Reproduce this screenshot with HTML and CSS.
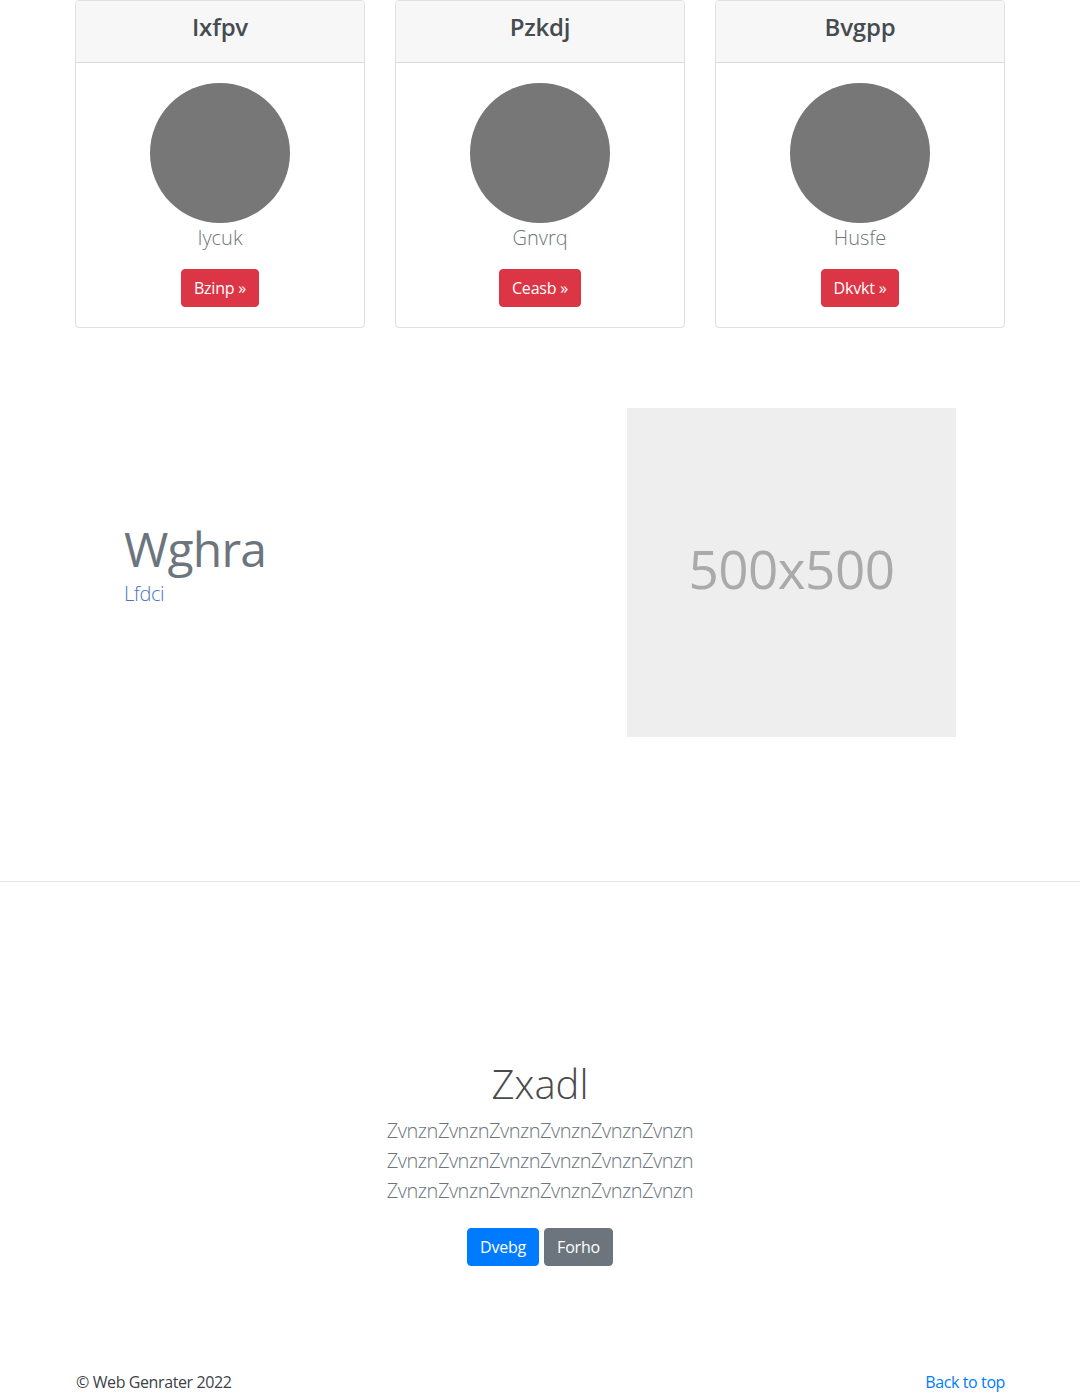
FILE: index.html
```html
<!DOCTYPE html>
<html lang="en">
<head>
<meta charset="utf-8">
<title>Web Genrater</title>
<link rel="stylesheet" href="styles.css">
</head>
<body>
<main>
  <section class="cards">
    <div class="card">
      <div class="card-header"><h4 class="card-title">Ixfpv</h4></div>
      <div class="card-body">
        <svg class="avatar" width="140" height="140" viewBox="0 0 140 140"><circle cx="70" cy="70" r="70" fill="#777"/></svg>
        <p class="lead muted">Iycuk</p>
        <a class="btn btn-danger" href="#">Bzinp »</a>
      </div>
    </div>
    <div class="card">
      <div class="card-header"><h4 class="card-title">Pzkdj</h4></div>
      <div class="card-body">
        <svg class="avatar" width="140" height="140" viewBox="0 0 140 140"><circle cx="70" cy="70" r="70" fill="#777"/></svg>
        <p class="lead muted">Gnvrq</p>
        <a class="btn btn-danger" href="#">Ceasb »</a>
      </div>
    </div>
    <div class="card">
      <div class="card-header"><h4 class="card-title">Bvgpp</h4></div>
      <div class="card-body">
        <svg class="avatar" width="140" height="140" viewBox="0 0 140 140"><circle cx="70" cy="70" r="70" fill="#777"/></svg>
        <p class="lead muted">Husfe</p>
        <a class="btn btn-danger" href="#">Dkvkt »</a>
      </div>
    </div>
  </section>

  <section class="featurette">
    <div class="featurette-text">
      <h2 class="featurette-heading">Wghra</h2>
      <p class="lead featurette-sub">Lfdci</p>
    </div>
    <div class="placeholder"><span>500x500</span></div>
  </section>

  <hr class="divider">

  <section class="jumbo">
    <h1 class="jumbo-heading">Zxadl</h1>
    <p class="lead muted jumbo-lead">ZvnznZvnznZvnznZvnznZvnznZvnzn ZvnznZvnznZvnznZvnznZvnznZvnzn ZvnznZvnznZvnznZvnznZvnznZvnzn</p>
    <div class="jumbo-actions">
      <a class="btn btn-primary" href="#">Dvebg</a>
      <a class="btn btn-secondary" href="#">Forho</a>
    </div>
  </section>
</main>

<footer class="footer">
  <p class="copy">© Web Genrater 2022</p>
  <a class="back" href="#">Back to top</a>
</footer>
</body>
</html>
```

FILE: styles.css
```css
* { box-sizing: border-box; }

html, body {
  margin: 0;
  padding: 0;
}

body {
  font-family: "Segoe UI", "Open Sans", "Noto Sans", sans-serif;
  font-size: 16px;
  line-height: 1.5;
  color: #212529;
  background: #fff;
}

.cards {
  width: 930px;
  margin: 0 auto;
  display: grid;
  grid-template-columns: repeat(3, 1fr);
  gap: 30px;
}

.card {
  border: 1px solid rgba(0, 0, 0, 0.125);
  border-radius: 4px;
  text-align: center;
  overflow: hidden;
}

.card-header {
  background: #f7f7f7;
  border-bottom: 1px solid rgba(0, 0, 0, 0.125);
  padding: 12px 20px 12px;
}

.card-title {
  margin: 0 0 8px;
  font-size: 24px;
  font-weight: 600;
  line-height: 1.2;
  color: #464b50;
  letter-spacing: -0.2px;
}

.card-body {
  padding: 20px;
}

.avatar {
  display: block;
  margin: 0 auto;
}

.lead {
  font-size: 20px;
  font-weight: 300;
  line-height: 30px;
  margin: 0 0 16px;
}

.muted { color: #6c757d; }

.btn {
  display: inline-block;
  padding: 6px 12px;
  font-size: 16px;
  line-height: 24px;
  border-radius: 4px;
  color: #fff;
  text-decoration: none;
  border: 1px solid transparent;
  letter-spacing: -0.2px;
}

.btn-danger { background: #dc3545; border-color: #dc3545; }
.btn-primary { background: #007bff; border-color: #007bff; }
.btn-secondary { background: #6c757d; border-color: #6c757d; }

.featurette {
  width: 832px;
  margin: 80px auto 0;
  display: flex;
  justify-content: space-between;
  align-items: center;
}

.featurette-heading {
  margin: 0 0 2px;
  font-size: 48px;
  font-weight: 400;
  line-height: 1.2;
  color: #6c757d;
  letter-spacing: -0.8px;
}

.featurette-sub {
  color: #4a74c4;
  letter-spacing: -0.4px;
}

.placeholder {
  width: 329px;
  height: 329px;
  background: #eee;
  display: flex;
  align-items: center;
  justify-content: center;
  padding-bottom: 7px;
}

.placeholder span {
  font-size: 53px;
  color: #aaa;
  line-height: 1;
  letter-spacing: -0.5px;
}

.divider {
  margin: 144px 0 0;
  border: 0;
  border-top: 1px solid rgba(0, 0, 0, 0.1);
  height: 0;
}

.jumbo {
  padding-top: 178px;
  text-align: center;
}

.jumbo-heading {
  margin: 0 0 8px;
  font-size: 40px;
  font-weight: 300;
  line-height: 48px;
  color: #4a4a4a;
}

.jumbo-lead {
  max-width: 400px;
  margin: 0 auto 22px;
  letter-spacing: -0.5px;
}

.jumbo-actions {
  display: flex;
  justify-content: center;
  gap: 5px;
}

.footer {
  width: 930px;
  margin: 104px auto 0;
  display: flex;
  justify-content: space-between;
  align-items: center;
  letter-spacing: -0.4px;
}

.copy {
  margin: 0;
  padding-left: 1px;
  color: #3d4247;
}

.back {
  color: #007bff;
  text-decoration: none;
}
```
